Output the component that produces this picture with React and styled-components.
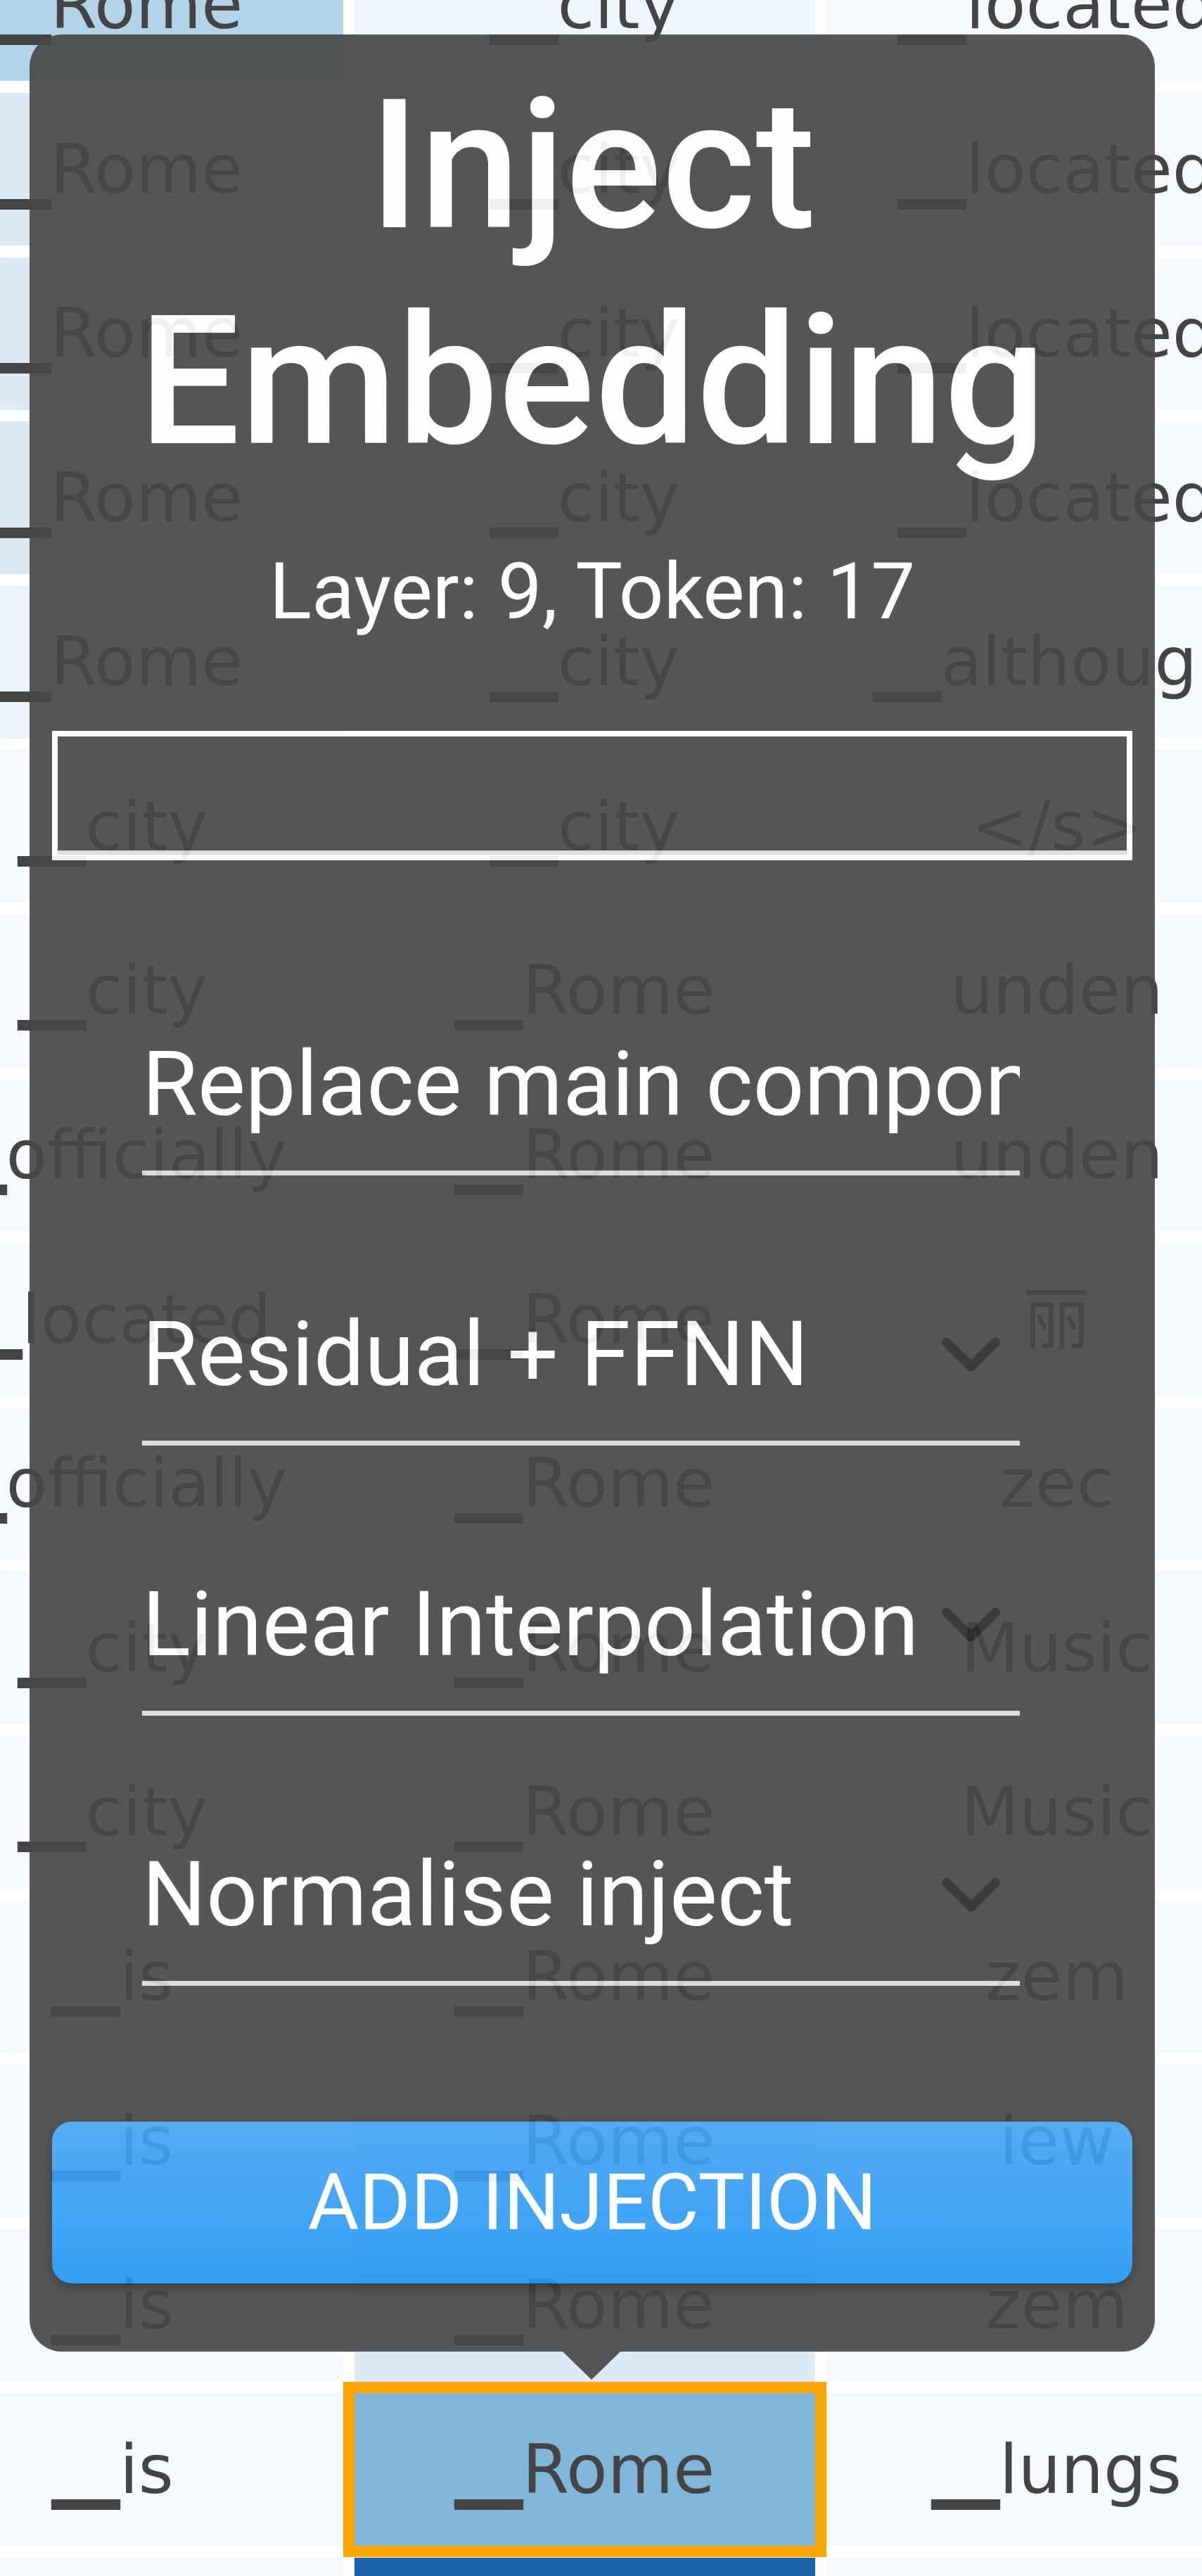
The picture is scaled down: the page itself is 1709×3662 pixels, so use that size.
import React from "react"
import styled, { createGlobalStyle } from "styled-components"
import { ChevronDown } from "lucide-react"

const GlobalStyle = createGlobalStyle`
  html, body {
    margin: 0;
    padding: 0;
    background: #ffffff;
  }
`

const PALE = "#f5f9fe"
const SOFT = "#dde9f5"

// token grid behind the popup: [token, cell colour] per column
const rows = [
    [["▁Rome", "#b3d4e8"], ["▁city", "#eff5fc"], ["▁located", PALE]],
    [["▁Rome", SOFT], ["▁city", "#eef4fb"], ["▁located", PALE]],
    [["▁Rome", SOFT], ["▁city", "#e6eff8"], ["▁located", PALE]],
    [["▁Rome", SOFT], ["▁city", "#eef4fb"], ["▁located", PALE]],
    [["▁Rome", "#eaf2fa"], ["▁city", PALE], ["▁although", PALE]],
    [["▁city", PALE], ["▁city", PALE], ["</s>", PALE]],
    [["▁city", PALE], ["▁Rome", "#eef4fb"], ["unden", PALE]],
    [["▁officially", PALE], ["▁Rome", "#eef4fb"], ["unden", PALE]],
    [["▁located", PALE], ["▁Rome", "#eef4fb"], ["丽", PALE]],
    [["▁officially", PALE], ["▁Rome", "#eef4fb"], ["zec", PALE]],
    [["▁city", PALE], ["▁Rome", "#eef4fb"], ["Music", PALE]],
    [["▁city", PALE], ["▁Rome", "#eef4fb"], ["Music", PALE]],
    [["▁is", PALE], ["▁Rome", "#eef4fb"], ["zem", PALE]],
    [["▁is", PALE], ["▁Rome", "#e6eff8"], ["iew", PALE]],
    [["▁is", PALE], ["▁Rome", SOFT], ["zem", PALE]],
    [["▁is", PALE], ["▁Rome", "#80b6d9", true], ["▁lungs", PALE]],
    [["▁is", PALE], ["▁Rome", "#1a65aa"], ["▁lungs", PALE]],
]

const fields = [
    { text: "Replace main component", input: true },
    { text: "Residual + FFNN" },
    { text: "Linear Interpolation" },
    { text: "Normalise inject" },
]

// sentencepiece tokens start with the ▁ marker, drawn a bit wider
function Token({ value }) {
    if (!value.startsWith("▁")) return value
    return <><Marker>▁</Marker>{value.slice(1)}</>
}

export default function App() {
    return (
        <>
            <GlobalStyle />
            <Page>
                <TokenGrid>
                    {rows.map((row, r) =>
                        row.map(([token, bg, selected], c) => (
                            <Cell key={`${r}-${c}`} bg={bg} selected={selected}>
                                <Token value={token} />
                            </Cell>
                        ))
                    )}
                </TokenGrid>

                <Popup>
                    <Title>Inject Embedding</Title>
                    <Subtitle>Layer: 9, Token: 17</Subtitle>
                    <EmbeddingBox />
                    {fields.map((f, i) => (
                        <Field key={f.text} first={i === 0}>
                            {f.input
                                ? <FieldInput readOnly value={f.text} />
                                : <FieldText>{f.text}</FieldText>}
                            {!f.input && <ChevronDown size={139} strokeWidth={2.3} color="#2b2b2b" style={{ flexShrink: 0 }} />}
                        </Field>
                    ))}
                    <AddButton>Add injection</AddButton>
                </Popup>
            </Page>
        </>
    )
}

const Page = styled.div`
    position: relative;
    width: 1709px;
    height: 3662px;
    overflow: hidden;
    background: #ffffff;
`

const TokenGrid = styled.div`
    display: grid;
    grid-template-columns: repeat(3, 655px);
    grid-auto-rows: 217px;
    column-gap: 16px;
    row-gap: 16.6px;
    margin-left: -167px;
    margin-top: -101.6px;
`

const Cell = styled.div`
    display: flex;
    align-items: center;
    justify-content: center;
    white-space: nowrap;
    background: ${props => props.bg};
    color: #444444;
    font-family: "DejaVu Sans", "Noto Sans CJK SC", sans-serif;
    font-size: 96px;
    line-height: 1;
    ${props => props.selected && `
        position: relative;
        z-index: 1;
        outline: 16px solid #ffa500;
        outline-offset: 0;
    `}
`

const Marker = styled.span`
    display: inline-block;
    transform: scaleX(1.3);
    transform-origin: left center;
    margin-right: 22px;
`

const Popup = styled.div`
    position: absolute;
    left: 42px;
    top: 49px;
    z-index: 3;
    width: 1600px;
    box-sizing: border-box;
    padding: 33px 32px 97px;
    display: flex;
    flex-direction: column;
    background: #474747;
    border-radius: 46px;
    opacity: 0.92;
    color: #ffffff;
    font-family: Roboto, "Liberation Sans", sans-serif;

    &::after {
        content: "";
        position: absolute;
        left: 758px;
        bottom: -40px;
        border-left: 41px solid transparent;
        border-right: 41px solid transparent;
        border-top: 40px solid #474747;
    }
`

const Title = styled.h1`
    margin: 0;
    font-size: 256px;
    line-height: 307px;
    font-weight: 500;
    text-align: center;
`

const Subtitle = styled.p`
    margin: 78px 0 0;
    font-size: 112px;
    line-height: 134px;
    font-weight: 400;
    text-align: center;
`

const EmbeddingBox = styled.div`
    margin-top: 131px;
    height: 184px;
    box-sizing: border-box;
    border: 8px solid #ffffff;
    box-shadow: inset 0 -6px 0 #dcdcdc;
`

const Field = styled.div`
    display: flex;
    align-items: center;
    width: 1248px;
    margin: ${props => props.first ? "243px" : "179px"} 0 0 128px;
    padding-bottom: 48px;
    border-bottom: 7px solid #dcdcdc;
`

const FieldText = styled.span`
    flex: 1;
    min-width: 0;
    overflow: hidden;
    white-space: nowrap;
    font-size: 128px;
    line-height: 150px;
    color: #ffffff;
`

const FieldInput = styled.input`
    flex: 1;
    min-width: 0;
    height: 150px;
    padding: 0;
    border: none;
    outline: none;
    background: transparent;
    color: #ffffff;
    font-family: Roboto, "Liberation Sans", sans-serif;
    font-size: 128px;
    line-height: 150px;
`

const AddButton = styled.button`
    margin-top: 193px;
    height: 230px;
    display: flex;
    align-items: center;
    justify-content: center;
    border: none;
    border-radius: 28px;
    background: linear-gradient(#46a5f4, #2397f3);
    box-shadow: 0 6px 14px rgba(0, 0, 0, 0.35);
    color: #ffffff;
    font-family: Roboto, "Liberation Sans", sans-serif;
    font-size: 112px;
    font-weight: 400;
    line-height: 1;
    text-transform: uppercase;
`
